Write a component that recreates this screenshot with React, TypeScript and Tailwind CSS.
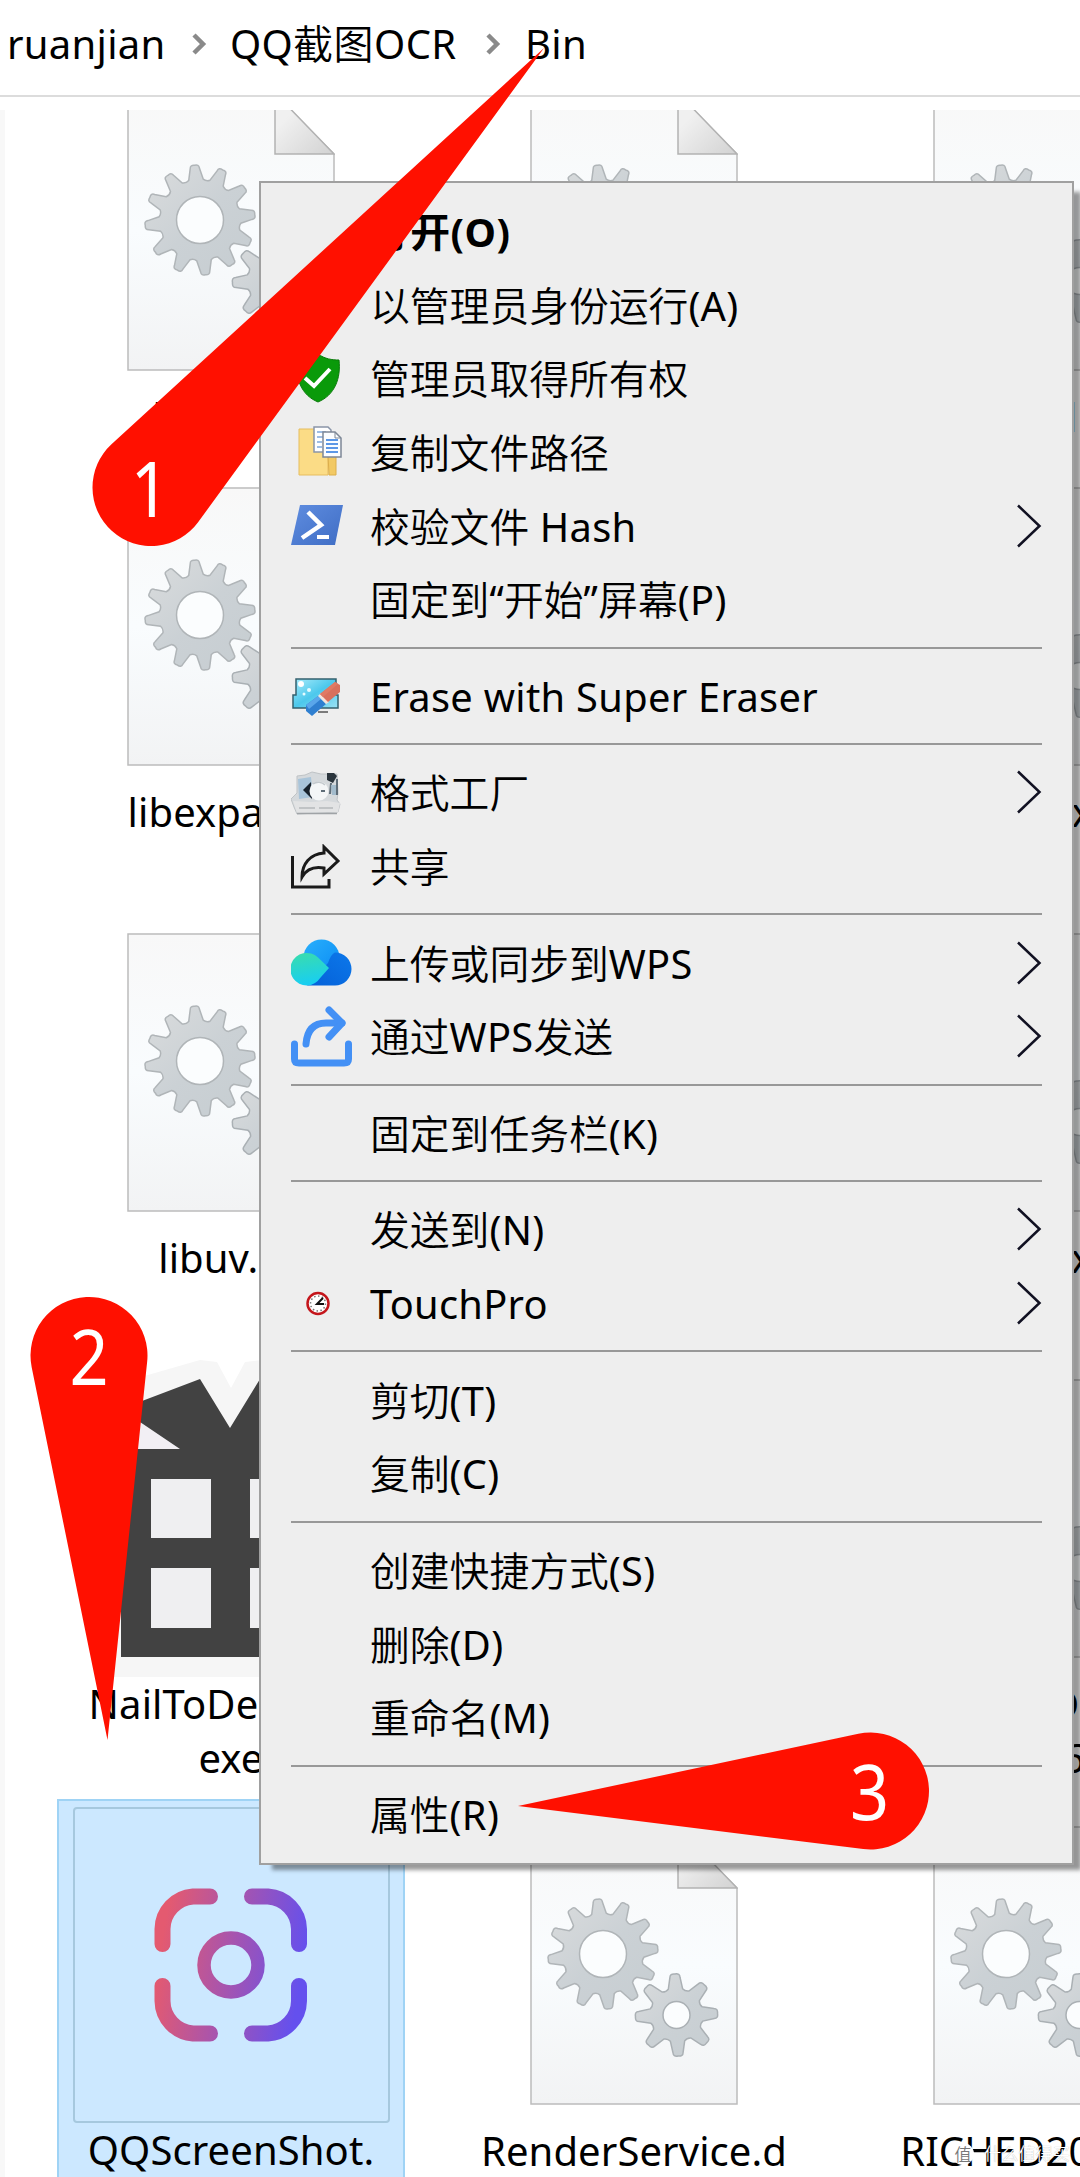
import { type ReactNode } from "react";

const FONT = "font-['Noto_Sans','Noto_Sans_CJK_SC',sans-serif]";

type Point = [number, number];

// Closed outline of a cog with slightly tapered teeth
function cogPath(cx: number, cy: number, outer: number, root: number, teeth: number, turn: number) {
  const step = (Math.PI * 2) / teeth;
  const at = (r: number, a: number) =>
    `${(cx + r * Math.cos(a)).toFixed(1)} ${(cy + r * Math.sin(a)).toFixed(1)}`;
  let d = "";
  for (let i = 0; i < teeth; i++) {
    const a = turn + i * step;
    d += `${i === 0 ? "M" : "L"}${at(root, a - step * 0.34)}`;
    d += `L${at(outer - 3, a - step * 0.17)}`;
    d += `Q${at(outer + 1, a - step * 0.15)} ${at(outer, a)}`;
    d += `Q${at(outer + 1, a + step * 0.15)} ${at(outer - 3, a + step * 0.17)}`;
    d += `L${at(root, a + step * 0.34)}`;
    d += `Q${at(root - 2, a + step * 0.5)} ${at(root, a + step * 0.66)}`;
  }
  return `${d}Z`;
}

function DllIcon() {
  return (
    <svg width="208" height="279" viewBox="0 0 208 279" className="block">
      <defs>
        <linearGradient id="sheet" x1="0" y1="0" x2="0" y2="1">
          <stop offset="0" stopColor="#f8f8f8" />
          <stop offset="0.5" stopColor="#f9fcfe" />
          <stop offset="1" stopColor="#f2f3f4" />
        </linearGradient>
        <linearGradient id="fold" x1="0" y1="0" x2="1" y2="1">
          <stop offset="0.3" stopColor="#f0f0f0" />
          <stop offset="1" stopColor="#d2d2d2" />
        </linearGradient>
        <linearGradient id="cog" x1="0" y1="0" x2="1" y2="1">
          <stop offset="0" stopColor="#dadcdd" />
          <stop offset="0.5" stopColor="#cbd1d5" />
          <stop offset="1" stopColor="#c6cdd1" />
        </linearGradient>
      </defs>
      <path d="M1 1H147L207 62V278H1Z" fill="url(#sheet)" stroke="#bcbcbc" strokeWidth="1.5" />
      <path d="M148 1V62H207Z" fill="url(#fold)" stroke="#b2b2b2" strokeWidth="1.5" />
      <path d={cogPath(73, 128, 55, 41, 12, -0.1)} fill="url(#cog)" stroke="#b0b5b8" strokeWidth="1.5" />
      <circle cx="73" cy="128" r="23.5" fill="#fbfdfe" stroke="#b0b5b8" strokeWidth="1.5" />
      <path d={cogPath(146.5, 189, 41, 27, 8, -0.04)} fill="url(#cog)" stroke="#aab0b4" strokeWidth="1.5" />
      <circle cx="146.5" cy="189" r="13.5" fill="#fbfdfe" stroke="#aab0b4" strokeWidth="1.5" />
    </svg>
  );
}

function GiftIcon() {
  return (
    <svg width="256" height="336" viewBox="103 1352 256 336" className="block">
      <path d="M113 1402 134 1379 200 1360 217 1362 231 1388 245 1362 262 1360 328 1379 349 1402V1677H113Z" fill="#f6f6f6" />
      <path d="M112 1402 140 1422 180 1449H121Z" fill="#f2eff4" />
      <path d="M142 1401 200 1379 230 1428 260 1379 319 1401 325 1420 282 1449H341V1657H121V1449H180L140 1422Z" fill="#424242" />
      <path d="M151 1479h60v59h-60zM250 1479h60v59h-60zM151 1568h60v60h-60zM250 1568h60v60h-60z" fill="#efeff1" />
    </svg>
  );
}

function ScreenShotIcon() {
  return (
    <svg width="154" height="155" viewBox="154 1888 154 155" className="block">
      <defs>
        <linearGradient id="shot" gradientUnits="userSpaceOnUse" x1="160" y1="1950" x2="302" y2="1975">
          <stop offset="0" stopColor="#e45a70" />
          <stop offset="0.5" stopColor="#a554b0" />
          <stop offset="1" stopColor="#6450ee" />
        </linearGradient>
      </defs>
      <g fill="none" stroke="url(#shot)" strokeLinecap="round" strokeWidth="16">
        <path d="M162.5 1944V1929A33 33 0 0 1 193 1896.5H210" />
        <path d="M252 1896.5H268A33 33 0 0 1 299 1929V1944" />
        <path d="M162.5 1986V2001A33 33 0 0 0 193 2033.500H210" />
        <path d="M252 2033.500H268A33 33 0 0 0 299 2001V1986" />
        <circle cx="231" cy="1965" r="27" strokeWidth="13.500" />
      </g>
    </svg>
  );
}

type FileEntry = { name: string; kind?: "dll" | "gift" | "shot" };

const rows: { height: string; files: FileEntry[] }[] = [
  { height: "h-[395px]", files: [{ name: "libcef.dll" }, { name: "libcurl.dll" }, { name: "libx.dll" }] },
  { height: "h-[446px]", files: [{ name: "libexpat.dll" }, { name: "libpng.dll" }, { name: "libvcorex.dll" }] },
  { height: "h-[446px]", files: [{ name: "libuv.dll" }, { name: "libyuv.dll" }, { name: "mfplatex.dll" }] },
  { height: "h-[447px]", files: [{ name: "NailToDesktop.\nexe", kind: "gift" }, { name: "Net.dll" }, { name: "codecD.dll\nver-6" }] },
  { height: "h-[447px]", files: [{ name: "QQScreenShot.\nexe", kind: "shot" }, { name: "RenderService.d\nll" }, { name: "RICHED20.DLL" }] },
];

function FileCell({ file }: { file: FileEntry }) {
  const label = <p className="whitespace-pre text-center text-[40px] leading-[54px] tracking-[0.1px]">{file.name}</p>;

  if (file.kind === "shot") {
    return (
      <div className="flex h-full flex-col items-center border-2 border-[#9fd3f5] bg-[#cce8ff] pt-[6px]">
        <div className="flex h-[316px] w-[317px] shrink-0 items-center justify-center rounded-[4px] border-2 border-[#a6c8de]">
          <ScreenShotIcon />
        </div>
        {label}
      </div>
    );
  }

  return (
    <div className="flex h-full flex-col items-center">
      {file.kind === "gift" ? (
        <div className="h-[325px] shrink-0">
          <GiftIcon />
        </div>
      ) : (
        <div className="h-[325px] shrink-0 pt-[27px]">
          <DllIcon />
        </div>
      )}
      {label}
    </div>
  );
}

// Han glyphs are set light, Latin runs inside them at normal weight
function Mixed({ text }: { text: string }) {
  return (
    <>
      {text.split(/([\x20-\x7e“”]+)/).map((part, i) =>
        i % 2 === 1 ? (
          <span key={i} className="font-normal tracking-[0.3px]">
            {part}
          </span>
        ) : (
          part
        )
      )}
    </>
  );
}

function Crumb({ text, className }: { text: string; className?: string }) {
  return (
    <span className={`whitespace-nowrap font-[350] ${className ?? ""}`}>
      <Mixed text={text} />
    </span>
  );
}

function CrumbArrow() {
  return (
    <svg width="16" height="24" viewBox="0 0 16 24" className="shrink-0" fill="none" stroke="#8a8a8a" strokeWidth="4.500">
      <path d="M3 3 12 12 3 21" />
    </svg>
  );
}

function ShieldIcon() {
  return (
    <svg width="44" height="50" viewBox="0 0 44 50" className="ml-[5px]">
      <path d="M22 1C29 6 36 7 43 7C45 25 39 42 22 49C5 42-1 25 1 7C8 7 15 6 22 1Z" fill="#0a9a0a" stroke="#087a08" strokeWidth="1" />
      <path d="M9 25 18 33 34 16" fill="none" stroke="#fff" strokeWidth="4" />
    </svg>
  );
}

function CopyPathIcon() {
  return (
    <svg width="44" height="50" viewBox="0 0 44 50" className="mb-[2px] ml-[7px]">
      <path d="M1 3H30V49H1Z" fill="#fbdc86" stroke="#e6bd5e" />
      <path d="M30 28H38V49H31Z" fill="#f2c964" stroke="#dcae4b" />
      <path d="M16 1H30L33 4V26H16Z" fill="#fff" stroke="#8a95a8" strokeWidth="1.500" />
      <path d="M19 6H28M19 11H25M19 16H24M19 21H24" stroke="#7fa8dc" strokeWidth="1.500" />
      <path d="M25 6H37L43 12V31H25Z" fill="#fbfdff" stroke="#7d8796" strokeWidth="1.500" />
      <path d="M37 6V12H43" fill="none" stroke="#7d8796" />
      <path d="M28 14H40M28 18H40M28 22H40M28 26H40" stroke="#5c97e6" strokeWidth="2" />
    </svg>
  );
}

function PowerShellIcon() {
  return (
    <svg width="53" height="40" viewBox="0 0 53 40" className="mb-[2px]">
      <defs>
        <linearGradient id="ps" x1="0" y1="0" x2="1" y2="1">
          <stop offset="0" stopColor="#5f8de0" />
          <stop offset="1" stopColor="#3f6dc4" />
        </linearGradient>
      </defs>
      <path d="M9 0H52L44 40H0Z" fill="url(#ps)" />
      <path d="M17 7 30 20 11 33" fill="none" stroke="#fff" strokeWidth="4.500" />
      <path d="M26 32H38" stroke="#fff" strokeWidth="4" />
    </svg>
  );
}

function EraserIcon() {
  return (
    <svg width="50" height="40" viewBox="0 0 50 40" className="ml-px mt-[2px]">
      <defs>
        <linearGradient id="screen" x1="0" y1="0" x2="1" y2="1">
          <stop offset="0" stopColor="#a9ecfb" />
          <stop offset="0.5" stopColor="#4cc8ec" />
          <stop offset="1" stopColor="#9be2f4" />
        </linearGradient>
      </defs>
      <path d="M4 2H44V18H46V31H1V18H4Z" fill="url(#screen)" stroke="#35606e" strokeWidth="1.500" />
      <path d="M26 35H36" stroke="#555" strokeWidth="1.500" />
      <path d="M14 28 26 19 34 27 20 39 14 34Z" fill="#2f7fd0" />
      <path d="M14 28 26 19 29 22 17 32Z" fill="#5aa6ea" />
      <path d="M26 19 29 16 37 25 34 27Z" fill="#f3e3dc" />
      <path d="M28 17 43 5 48 8V15L36 25Z" fill="#d9705c" />
      <path d="M28 17 43 5 46 7 31 20Z" fill="#e07a64" />
      <circle cx="9" cy="7" r="3" fill="#fff" />
      <circle cx="17" cy="13" r="2" fill="#e6fbff" />
      <circle cx="12" cy="17" r="1.500" fill="#e6fbff" />
    </svg>
  );
}

function FormatFactoryIcon() {
  return (
    <svg width="50" height="44" viewBox="0 0 50 44" className="mt-[2px]">
      <path d="M6 5 14 4 21 1 30 3 36 3 46 3 47 22 46 29 49 33 47 41 6 43 3 36 0 28 6 22Z" fill="#d5d9dc" stroke="#bfc3c6" />
      <path d="M7 8 20 6 22 26 8 28Z" fill="#a9c4d9" />
      <path d="M12 19 20 11 21 28Z" fill="#18222c" />
      <circle cx="28" cy="20" r="9.500" fill="#f4f6f7" />
      <path d="M22 13A9 9 0 0 1 34 14" fill="none" stroke="#c3c9cd" strokeWidth="1.500" />
      <path d="M36 2 43 2 46 5 42 12 36 9Z" fill="#2a343c" />
      <path d="M40 12 39 23M46 8V24M30 20H34" stroke="#5f6d78" strokeWidth="2" />
      <path d="M40 14H45V24H41Z" fill="#a3bccd" />
      <path d="M2 30 20 31 36 30 49 32 47 41 6 42Z" fill="#e2e3e4" />
      <path d="M8 37H24M28 37H42" stroke="#c0c3c5" strokeWidth="2" />
      <path d="M6 42.500H46" stroke="#9fa3a6" strokeWidth="1.500" />
    </svg>
  );
}

function ShareIcon() {
  return (
    <svg width="50" height="45" viewBox="0 0 50 45" fill="none" stroke="#1a1a1a" strokeWidth="3">
      <path d="M1.500 12V43H38V35" />
      <path d="M33 3 47 17 33 30V24C22 22 15 26 11 33C11 20 19 10 33 9Z" />
    </svg>
  );
}

function CloudIcon() {
  return (
    <svg width="61" height="47" viewBox="0 0 61 47">
      <defs>
        <linearGradient id="cloudTop" x1="0" y1="0" x2="1" y2="1">
          <stop offset="0" stopColor="#29b0fb" />
          <stop offset="1" stopColor="#0a8af4" />
        </linearGradient>
        <linearGradient id="cloudLeft" x1="0.400" y1="0" x2="0.600" y2="1">
          <stop offset="0" stopColor="#38dcb0" />
          <stop offset="1" stopColor="#16cdf6" />
        </linearGradient>
        <linearGradient id="cloudRight" x1="1" y1="0" x2="0" y2="1">
          <stop offset="0" stopColor="#0c78ea" />
          <stop offset="1" stopColor="#0560d8" />
        </linearGradient>
      </defs>
      <circle cx="30.500" cy="18.500" r="18" fill="url(#cloudTop)" />
      <path d="M44 13.500A16.500 16.500 0 0 1 44 46.500H16L37 24Q40 15 44 13.500Z" fill="url(#cloudRight)" />
      <path d="M16 46.500A16.300 16.300 0 1 1 27 18.500L38 29 30 38Q24 46.500 16 46.500Z" fill="url(#cloudLeft)" />
    </svg>
  );
}

function WpsSendIcon() {
  return (
    <svg width="61" height="61" viewBox="0 0 61 61" fill="none" stroke="#4390f5" strokeWidth="7" strokeLinecap="round" strokeLinejoin="round">
      <path d="M3.500 38V53Q3.500 57 8 57H53Q57.500 57 57.500 53V38" />
      <path d="M15 38C16 25 22 17 35 17H51" />
      <path d="M38 4 51 17 38 31" />
    </svg>
  );
}

function ClockIcon() {
  return (
    <svg width="24" height="25" viewBox="0 0 24 25" className="ml-[15px]">
      <circle cx="12" cy="12.500" r="10.500" fill="#fff" stroke="#c4161c" strokeWidth="2.500" />
      <circle cx="12" cy="12.500" r="7.500" fill="none" stroke="#777" strokeWidth="1.500" strokeDasharray="1.500 2.400" />
      <path d="M17 7 11 13H18" fill="none" stroke="#111" strokeWidth="2" />
    </svg>
  );
}

function MenuArrow() {
  return (
    <svg width="25" height="44" viewBox="0 0 25 44" fill="none" stroke="#111122" strokeWidth="2.500">
      <path d="M1 1.500 22.500 22 1 42.500" />
    </svg>
  );
}

type MenuItem = { label: string; icon?: ReactNode; submenu?: boolean; bold?: boolean };

const groups: MenuItem[][] = [
  [
    { label: "打开(O)", bold: true },
    { label: "以管理员身份运行(A)" },
    { label: "管理员取得所有权", icon: <ShieldIcon /> },
    { label: "复制文件路径", icon: <CopyPathIcon /> },
    { label: "校验文件 Hash", icon: <PowerShellIcon />, submenu: true },
    { label: "固定到“开始”屏幕(P)" },
  ],
  [{ label: "Erase with Super Eraser", icon: <EraserIcon /> }],
  [
    { label: "格式工厂", icon: <FormatFactoryIcon />, submenu: true },
    { label: "共享", icon: <ShareIcon /> },
  ],
  [
    { label: "上传或同步到WPS", icon: <CloudIcon />, submenu: true },
    { label: "通过WPS发送", icon: <WpsSendIcon />, submenu: true },
  ],
  [{ label: "固定到任务栏(K)" }],
  [
    { label: "发送到(N)", submenu: true },
    { label: "TouchPro", icon: <ClockIcon />, submenu: true },
  ],
  [{ label: "剪切(T)" }, { label: "复制(C)" }],
  [{ label: "创建快捷方式(S)" }, { label: "删除(D)" }, { label: "重命名(M)" }],
  [{ label: "属性(R)" }],
];

function ContextMenu() {
  return (
    <div className="absolute left-[259px] top-[181px] h-[1684px] w-[815px] border-2 border-[#a0a0a0] bg-[#eeeeee] pl-[30px] pr-[30px] pt-[11px] shadow-[10px_8px_4px_-3px_rgba(0,0,0,0.4)]">
      {groups.map((items, g) => (
        <div key={g}>
          {g > 0 && (
            <div className="flex h-[22.86px] items-center">
              <div className="h-[2px] w-full bg-[#989898]" />
            </div>
          )}
          {items.map((item) => (
            <div key={item.label} className="flex h-[73.7px] items-center">
              <div className="flex w-[79px] shrink-0 items-center">{item.icon}</div>
              <span
                className={`grow whitespace-nowrap pt-[2px] text-[39.8px] leading-[54px] ${
                  item.bold ? "font-bold tracking-[0.5px]" : "font-[350]"
                }`}
              >
                {item.bold ? item.label : <Mixed text={item.label} />}
              </span>
              {item.submenu && <MenuArrow />}
            </div>
          ))}
        </div>
      ))}
    </div>
  );
}

// Teardrop: a disc plus the two tangents that meet at the tip
function pinPath([cx, cy]: Point, [tx, ty]: Point, r: number) {
  const dist = Math.hypot(tx - cx, ty - cy);
  const dir = Math.atan2(ty - cy, tx - cx);
  const open = Math.acos(r / dist);
  const on = (a: number) => `${cx + r * Math.cos(a)} ${cy + r * Math.sin(a)}`;
  return `M${tx} ${ty}L${on(dir + open)}A${r} ${r} 0 1 1 ${on(dir - open)}Z`;
}

const pins: { n: string; center: Point; tip: Point; text: Point }[] = [
  { n: "1", center: [151, 487.5], tip: [544, 48], text: [150, 516.5] },
  { n: "2", center: [89, 1355.5], tip: [107.5, 1740], text: [89, 1385] },
  { n: "3", center: [870.5, 1791], tip: [518, 1806], text: [869.5, 1820] },
];

function Pins() {
  return (
    <svg width="1080" height="2177" viewBox="0 0 1080 2177" className="absolute left-0 top-0">
      {pins.map((pin) => (
        <g key={pin.n}>
          <path d={pinPath(pin.center, pin.tip, 58.5)} fill="#ff1000" />
          <text
            transform={`translate(${pin.text[0]} ${pin.text[1]}) scale(0.9 1)`}
            textAnchor="middle"
            fontSize="76"
            fill="#fff"
          >
            {pin.n}
          </text>
        </g>
      ))}
    </svg>
  );
}

function Watermark() {
  return (
    <div className="absolute left-[952px] top-[2143px] flex items-center gap-[10px] font-[350] text-white">
      <span className="flex h-[22px] w-[22px] items-center justify-center rounded-full bg-white text-[17px] leading-none text-[#777]">值</span>
      <span className="whitespace-nowrap text-[17.2px] leading-[22px] [text-shadow:0_0_1px_rgba(0,0,0,0.35)]">什么值得买</span>
    </div>
  );
}

export default function App() {
  return (
    <div className={`relative h-[2177px] w-[1080px] overflow-hidden bg-white text-black ${FONT}`}>
      <header className="flex h-[97px] items-center border-b-2 border-[#dcdcdc] pb-[7px] pl-[7px] text-[40px] leading-[54px]">
        <Crumb text="ruanjian" className="w-[184px]" />
        <CrumbArrow />
        <Crumb text="QQ截图OCR" className="ml-[23px] w-[255px] tracking-[0.5px]" />
        <CrumbArrow />
        <Crumb text="Bin" className="ml-[24px]" />
      </header>

      <main className="mt-[13px] h-[2067px] overflow-hidden border-l-[5px] border-[#f8f8f8] pl-[52px]">
        <div className="-mt-[45px]">
          {rows.map((row) => (
            <div key={row.files[0].name} className={`grid grid-cols-[348px_348px_348px] gap-x-[55px] ${row.height}`}>
              {row.files.map((file) => (
                <FileCell key={file.name} file={file} />
              ))}
            </div>
          ))}
        </div>
      </main>

      <ContextMenu />
      <Pins />
      <Watermark />
    </div>
  );
}
